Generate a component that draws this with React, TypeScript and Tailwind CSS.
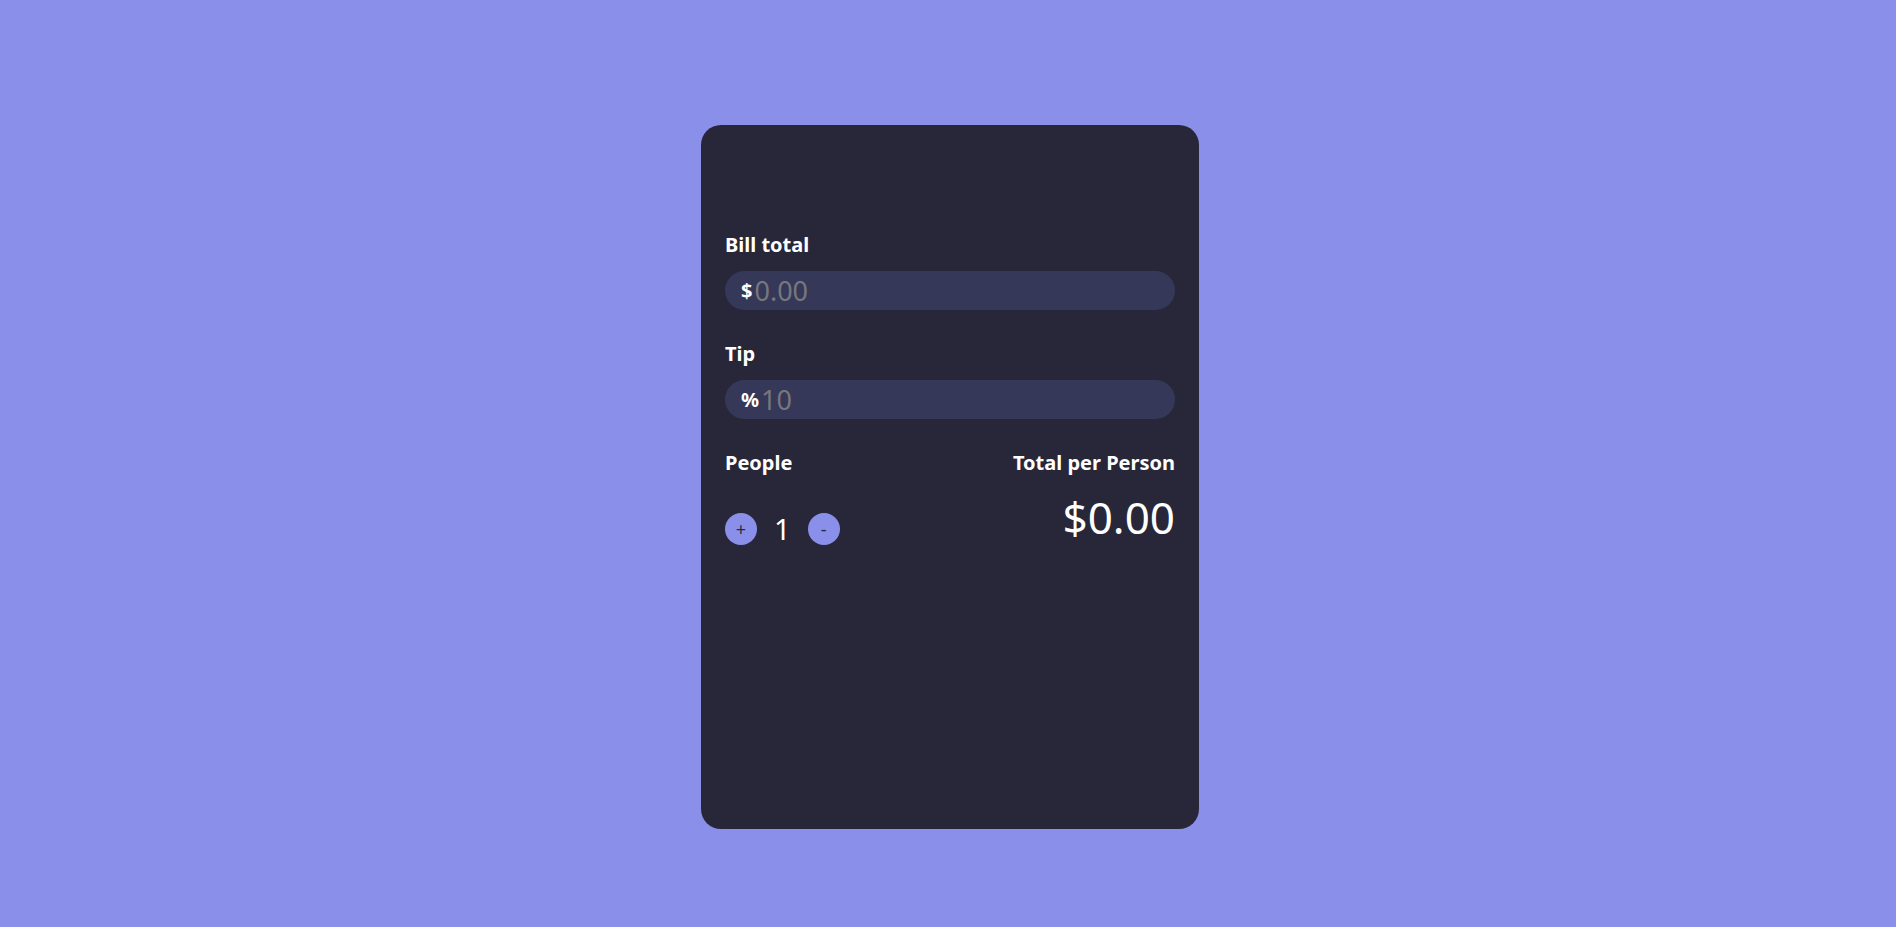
import { useState } from 'react';

const font = { fontFamily: '"Noto Sans", "Open Sans", sans-serif' };

const Field = ({ label, symbol, placeholder }: { label: string; symbol: string; placeholder: string }) => (
    <div>
        <label className="block text-[20px] font-bold leading-[28px] text-white">{label}</label>
        <div className="mt-[12px] flex h-[39px] items-center rounded-full bg-[#353858] pl-4 pr-4">
            <span className="text-[20px] font-bold text-white">{symbol}</span>
            <input
                type="number"
                placeholder={placeholder}
                className="ml-[2px] w-full bg-transparent text-[27px] leading-none text-white outline-none placeholder:text-[#77777d]"
                style={font}
            />
        </div>
    </div>
);

export default function App() {
    const [people, setPeople] = useState(1);

    return (
        <div className="flex min-h-screen justify-center bg-[#8a90ea] pl-[4px] pt-[125px]" style={font}>
            <div className="h-[704px] w-[498px] rounded-[20px] bg-[#28273a] px-6 pt-[106px]">
                <Field label="Bill total" symbol="$" placeholder="0.00" />
                <div className="mt-[30px]">
                    <Field label="Tip" symbol="%" placeholder="10" />
                </div>
                <div className="mt-[30px] flex justify-between">
                    <div>
                        <p className="text-[20px] font-bold leading-[28px] text-white">People</p>
                        <div className="mt-[36px] flex items-center">
                            <button
                                onClick={() => setPeople(people + 1)}
                                className="flex h-8 w-8 items-center justify-center rounded-full bg-[#8a90ea] text-[18px] text-[#2b2b3d]"
                            >
                                +
                            </button>
                            <span className="mx-[17px] text-[29px] leading-8 text-white">{people}</span>
                            <button
                                onClick={() => setPeople(Math.max(1, people - 1))}
                                className="flex h-8 w-8 items-center justify-center rounded-full bg-[#8a90ea] text-[18px] text-[#2b2b3d]"
                            >
                                -
                            </button>
                        </div>
                    </div>
                    <div className="text-right">
                        <p className="text-[20px] font-bold leading-[28px] text-white">Total per Person</p>
                        <p className="mt-[18px] text-[44px] leading-[44px] text-white">$0.00</p>
                    </div>
                </div>
            </div>
        </div>
    );
}
